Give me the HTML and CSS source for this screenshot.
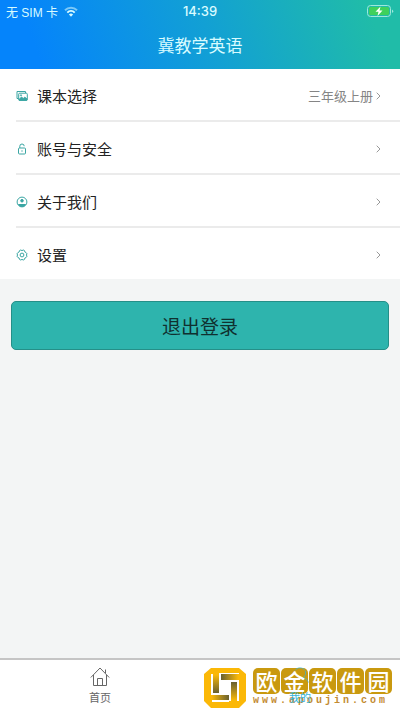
FILE: index.html
```html
<!DOCTYPE html>
<html lang="zh-CN">
<head>
<meta charset="utf-8">
<meta name="viewport" content="width=device-width, initial-scale=1">
<title>冀教学英语</title>
<link rel="stylesheet" href="styles.css">
</head>
<body>
<header class="header">
  <div class="status">
    <span class="carrier">无 SIM 卡
      <svg width="14" height="11" viewBox="0 0 14 11" fill="none" stroke="currentColor" stroke-width="2"><path d="M1 4.2a8.5 8.5 0 0 1 12 0" opacity=".55"/><path d="M3.3 6.6a5.3 5.3 0 0 1 7.4 0"/><path d="M7 10.7 4.9 8.6a3 3 0 0 1 4.2 0z" fill="currentColor" stroke="none"/></svg>
    </span>
    <span class="time">14:39</span>
    <svg class="battery" width="27" height="13" viewBox="0 0 27 13"><rect x=".5" y=".5" width="23" height="11" rx="3" fill="none" stroke="#9ee8dc"/><rect x="2" y="2" width="20" height="8" rx="1.5" fill="#3fd05c"/><path d="M13.5 1.5 8.500 6.700h3l-1 4.300 5-5.400h-3z" fill="#fff"/><path d="M25 4.500v3.500q1.200-.4 1.200-1.750T25 4.500z" fill="#9ee8dc"/></svg>
  </div>
  <h1 class="title">冀教学英语</h1>
</header>
<main class="content">
  <nav class="list">
    <a class="row" href="#book">
      <svg class="icon" viewBox="0 0 12 12"><path d="M2.500 8.500H1V1.500h8.500v1.500"/><rect x="2.700" y="3.200" width="8.600" height="7.200" rx="1"/><path d="m3 9.500 2.500-2.500 1.700 1.500 1.600-1.300L11 9v1.200H3z" fill="currentColor"/><circle cx="5" cy="5.300" r=".6"/></svg>
      <span class="label">课本选择</span><span class="value">三年级上册</span>
      <svg class="chevron" viewBox="0 0 5 8"><path d="m.7.7 3.300 3.300L.7 7.300"/></svg>
    </a>
    <a class="row" href="#account">
      <svg class="icon" viewBox="0 0 12 12"><rect x="2.500" y="5" width="7" height="6" rx="1"/><path d="M3.800 5V3.200a2.200 2.200 0 0 1 4.400 0M6 7.300v1.400"/></svg>
      <span class="label">账号与安全</span>
      <svg class="chevron" viewBox="0 0 5 8"><path d="m.7.7 3.300 3.300L.7 7.300"/></svg>
    </a>
    <a class="row" href="#about">
      <svg class="icon" viewBox="0 0 12 12"><circle cx="6" cy="6" r="4.900"/><circle cx="6" cy="4.700" r="1.300" fill="currentColor"/><path d="M2.500 8.500h7Q8.500 10.500 6 10.500T2.500 8.500z" fill="currentColor"/></svg>
      <span class="label">关于我们</span>
      <svg class="chevron" viewBox="0 0 5 8"><path d="m.7.7 3.300 3.300L.7 7.300"/></svg>
    </a>
    <a class="row" href="#settings">
      <svg class="icon" viewBox="0 0 12 12"><path d="m4.700 1 1.300.6L7.300 1l1.200.6.3 1.300 1.300.7.9 1.200-.6 1.200.6 1.200-.9 1.300-1.300.6-.3 1.300-1.200.6L6 10.400l-1.300.6-1.200-.6-.3-1.300-1.300-.6L1 7.200 1.600 6 1 4.800l.9-1.200 1.300-.7.3-1.300z"/><circle cx="6" cy="6" r="1.900"/></svg>
      <span class="label">设置</span>
      <svg class="chevron" viewBox="0 0 5 8"><path d="m.7.7 3.300 3.300L.7 7.300"/></svg>
    </a>
  </nav>
  <button class="logout" type="button">退出登录</button>
</main>
<footer class="footer">
  <div class="watermark">
    <svg width="42" height="40" viewBox="0 0 42 40">
      <defs>
        <linearGradient id="right"><stop stop-color="#686030"/><stop offset="1" stop-color="#f8b80a"/></linearGradient>
        <linearGradient id="left"><stop stop-color="#f8b80a"/><stop offset="1" stop-color="#686030"/></linearGradient>
        <linearGradient id="down" x2="0" y2="1"><stop stop-color="#f8b80a"/><stop offset="1" stop-color="#686030"/></linearGradient>
        <linearGradient id="up" x2="0" y2="1"><stop stop-color="#686030"/><stop offset="1" stop-color="#f8b80a"/></linearGradient>
      </defs>
      <path fill="#fbb807" d="M7 0h28l7 6v27l-7 7H7l-7-7V6z"/>
      <path fill="#fff" d="M15 5h2v7h18v2H27v19h-2v-6H7v-2h8zM7 6h2v19H7zM15 5h20v1H15zM33 14h2v19h-2zM8 32h17v2H8zM15 13h11v13H15z"/>
      <path fill="url(#right)" d="M17 6h17v6H17z"/><path fill="url(#down)" d="M9 7h6v18H9z"/><path fill="url(#left)" d="M8 27h17v5H8z"/><path fill="url(#up)" d="M27 14h6v18h-6z"/>
    </svg>
    <div class="brand">
      <div class="tiles"><b>欧</b><b>金</b><b>软</b><b>件</b><b>园</b></div>
      <div class="url">www.apoujin.com</div>
    </div>
  </div>
  <nav class="tabs">
    <a class="tab" href="#home">
      <svg width="20" height="20" viewBox="0 0 20 20" fill="none" stroke="currentColor"><path d="M.8 10.500 10 1l9.200 9.500M3.500 8v10.500h13V8M7.500 18.500v-7h5v7M15.500 6V2.500"/></svg>
      <span>首页</span>
    </a>
    <a class="tab active" href="#mine">
      <svg width="20" height="20" viewBox="0 0 20 20" fill="none" stroke="currentColor"><path d="M5 3.500a6 6 0 0 1 10 0M15.500 4q1 4-2 6.500 4 1.500 5 5" opacity=".7"/></svg>
      <span>我的</span>
    </a>
  </nav>
</footer>
</body>
</html>
```
FILE: styles.css
```css
* { box-sizing: border-box; }
body {
  margin: 0;
  min-height: 100vh;
  display: flex;
  flex-direction: column;
  background: #f3f5f5;
  color: #222;
  font-family: "Liberation Sans", "Noto Sans CJK SC", sans-serif;
}
a { color: inherit; text-decoration: none; }
.header {
  padding: 0 6px 9px;
  background: linear-gradient(70deg, #0584fb 10%, #12a0d4 52%, #20bca8 92%);
  color: #d8fbff;
}
.status {
  display: grid;
  grid-template-columns: 1fr auto 1fr;
  align-items: center;
  height: 22px;
  font-size: 13px;
}
.carrier {
  display: flex;
  align-items: center;
  gap: 6px;
  font-size: 12px;
  white-space: nowrap;
}
.time { font-family: Inter, sans-serif; font-weight: 500; }
.battery { justify-self: end; }
.title {
  margin: 11px 0 0;
  font-size: 17px;
  line-height: 27px;
  font-weight: 400;
  text-align: center;
}
.content { flex: 1; }
.list { background: #fff; padding-left: 16px; }
.row {
  display: flex;
  align-items: center;
  height: 53px;
  padding: 2px 19px 0 0;
  border-bottom: 2px solid #ebebeb;
}
.row:last-child { height: 51px; border: 0; }
.icon {
  width: 12px;
  height: 12px;
  margin-right: 9px;
  color: #3aa6a3;
  fill: none;
  stroke: currentColor;
}
.label { flex: 1; font-size: 15px; }
.value { margin-right: 3px; color: #858585; font-size: 13px; }
.chevron { width: 5px; height: 8px; fill: none; stroke: #999; }
.logout {
  display: block;
  width: calc(100% - 22px);
  height: 49px;
  margin: 22px auto;
  border: 1px solid #258f88;
  border-radius: 5px;
  background: #2eb4ad;
  color: #10302f;
  font: inherit;
  font-size: 19px;
}
.footer {
  position: relative;
  border-top: 2px solid #c5c5c5;
  background: #fff;
}
.tabs {
  position: relative;
  display: flex;
  height: 51px;
}
.tab {
  flex: 1;
  display: flex;
  flex-direction: column;
  align-items: center;
  padding-top: 7px;
  gap: 3px;
  color: #666;
  font-size: 11px;
  line-height: 16px;
}
.active { color: #35b4d8; }
.watermark {
  position: absolute;
  right: 8px;
  bottom: 3px;
  display: flex;
  align-items: center;
  gap: 7px;
}
.tiles { display: flex; gap: 1px; }
.tiles b {
  width: 27px;
  height: 26px;
  border-radius: 5px;
  background: #c9990f;
  color: #fff;
  font-family: "Noto Sans CJK SC", sans-serif;
  font-size: 22px;
  font-weight: 500;
  line-height: 25px;
  text-align: center;
}
.url {
  color: #c38b32;
  font-family: "Liberation Mono", monospace;
  font-size: 10px;
  font-weight: 700;
  line-height: 14px;
  letter-spacing: 3px;
}
```
